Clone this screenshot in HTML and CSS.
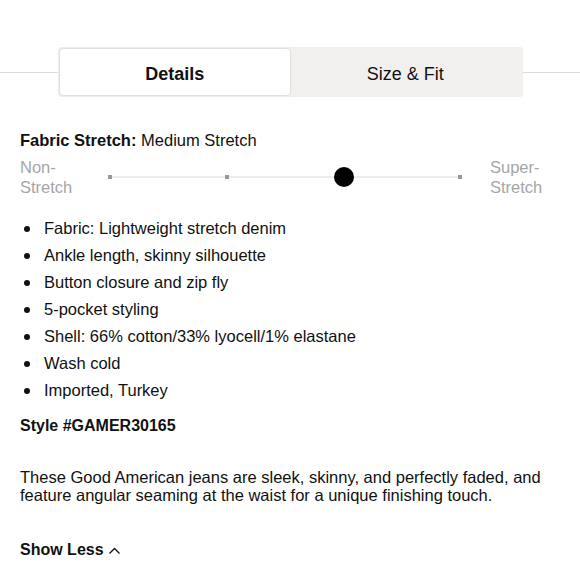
FILE: index.html
```html
<!DOCTYPE html>
<html>
<head>
<meta charset="utf-8">
<link rel="stylesheet" href="styles.css">
</head>
<body>
<div class="tabs-row">
  <div class="rule"></div>
  <div class="tabs">
    <div class="tab active">Details</div>
    <div class="tab">Size &amp; Fit</div>
  </div>
  <div class="rule"></div>
</div>
<div class="content">
  <div class="stretch-title"><b>Fabric Stretch:</b> Medium Stretch</div>
  <div class="stretch">
    <div class="label">Non-<br>Stretch</div>
    <div class="track">
      <span class="tick"></span>
      <span class="tick"></span>
      <span class="tick"></span>
      <span class="tick"></span>
      <span class="knob"></span>
    </div>
    <div class="label right">Super-<br>Stretch</div>
  </div>
  <ul class="bullets">
    <li>Fabric: Lightweight stretch denim</li>
    <li>Ankle length, skinny silhouette</li>
    <li>Button closure and zip fly</li>
    <li>5-pocket styling</li>
    <li>Shell: 66% cotton/33% lyocell/1% elastane</li>
    <li>Wash cold</li>
    <li>Imported, Turkey</li>
  </ul>
  <div class="style">Style #GAMER30165</div>
  <p class="desc">These Good American jeans are sleek, skinny, and perfectly faded, and feature angular seaming at the waist for a unique finishing touch.</p>
  <div class="less">Show Less <svg width="13" height="9" viewBox="0 0 13 9"><path d="M1.5 7.5 L6.5 2.5 L11.5 7.5" fill="none" stroke="#111" stroke-width="1.3"/></svg></div>
</div>
</body>
</html>
```
FILE: styles.css
```css
html, body { margin: 0; padding: 0; background: #fff; }
body { font-family: "Liberation Sans", Arial, sans-serif; color: #111; font-size: 16.5px; }
.tabs-row { display: flex; align-items: center; padding-top: 47px; }
.rule { flex: 1; height: 1px; background: #dcdcdc; }
.tabs { width: 461px; height: 46px; padding: 2px; background: #f1f0ee; border-radius: 3px; display: flex; }
.tab { flex: 1; display: flex; align-items: center; justify-content: center; font-size: 18px; color: #111; border-radius: 3px; padding-top: 4px; }
.tab.active { background: #fff; font-weight: bold; box-shadow: 0 0 2px rgba(0,0,0,0.25); }
.content { padding: 0 20px; }
.stretch-title { margin-top: 33px; line-height: 20px; }
.stretch { display: flex; align-items: center; margin-top: 7px; }
.label { color: #a6a6a6; line-height: 20px; width: 88px; }
.label.right { width: auto; margin-left: 28px; }
.track { width: 354px; height: 2px; background: #ececec; display: flex; justify-content: space-between; align-items: center; position: relative; }
.tick { width: 4px; height: 4px; background: #999; }
.knob { position: absolute; left: 226px; top: -9px; width: 20px; height: 20px; border-radius: 50%; background: #000; }
.bullets { list-style: none; margin: 18px 0 0; padding: 0; }
.bullets li { line-height: 27px; padding-left: 24px; position: relative; }
.bullets li::before { content: ""; position: absolute; left: 4px; top: 11px; width: 6px; height: 6px; border-radius: 50%; background: #111; }
.style { font-weight: bold; font-size: 16px; margin-top: 12px; line-height: 20px; }
.desc { margin: 32px 0 0; line-height: 18px; }
.less { font-weight: bold; font-size: 16px; margin-top: 36px; display: flex; align-items: center; gap: 4px; line-height: 20px; }
```
